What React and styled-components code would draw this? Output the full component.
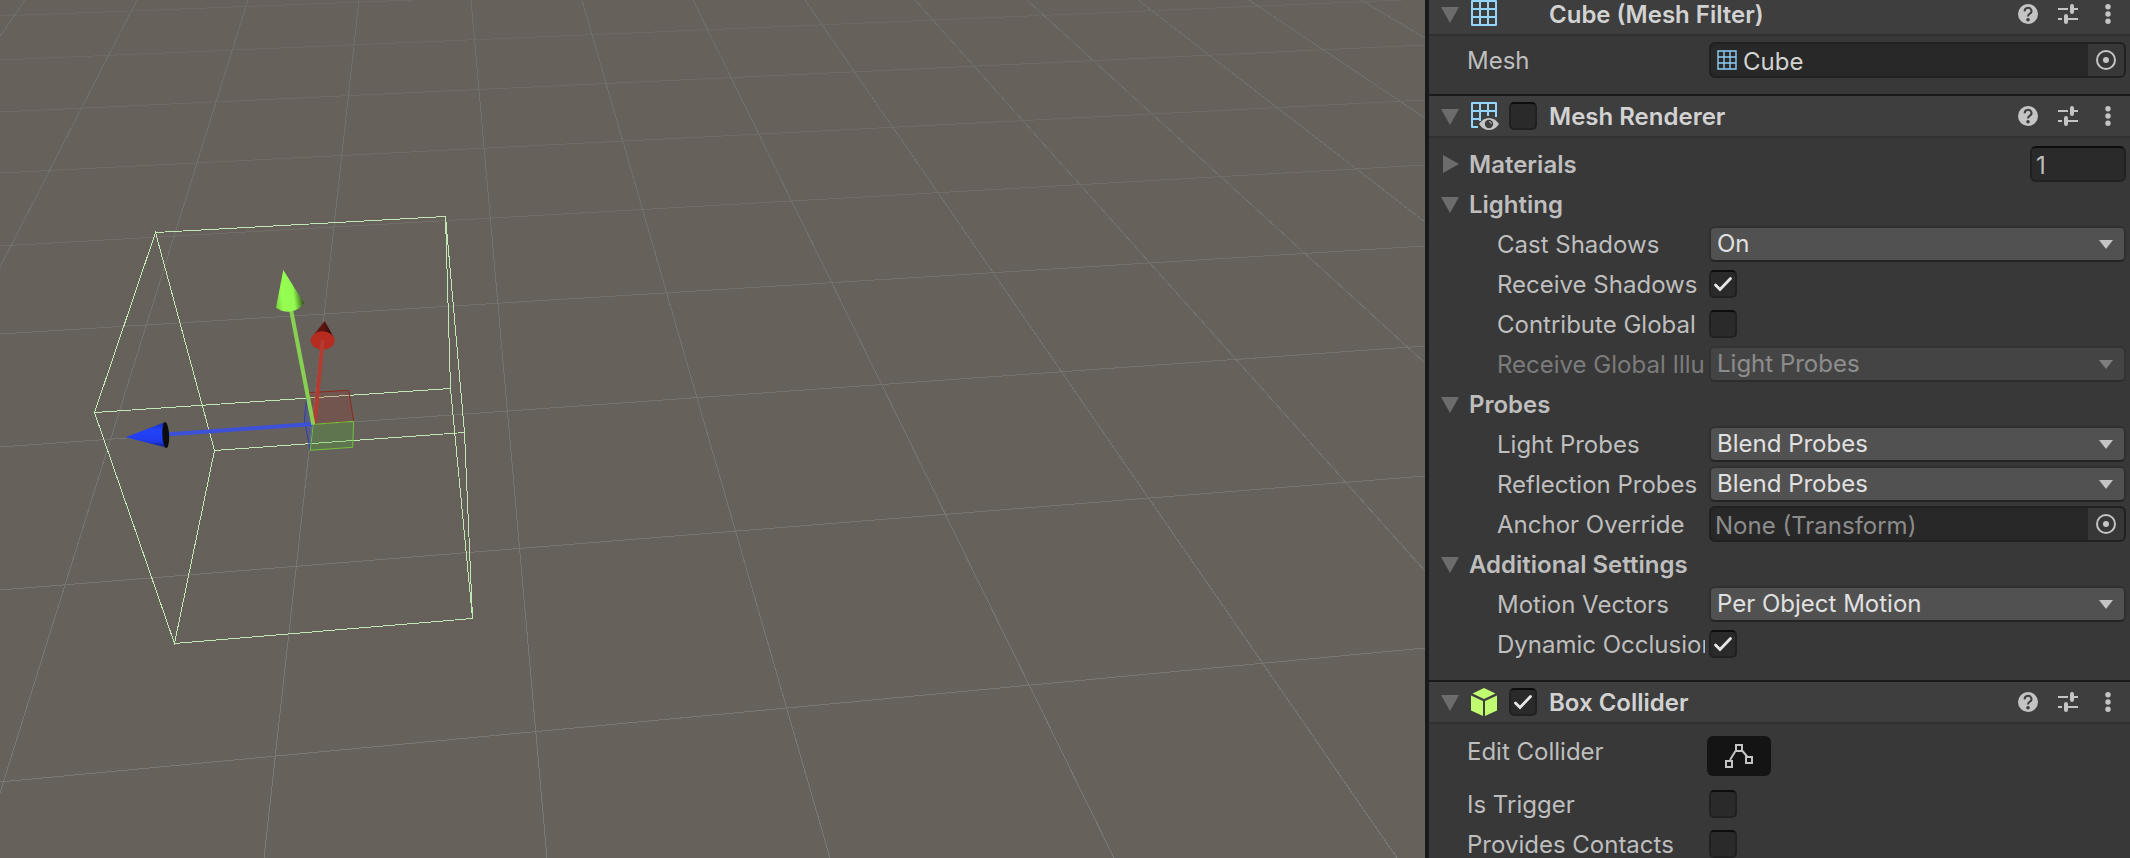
import { useState } from "react";
import styled, { createGlobalStyle } from "styled-components";

// every grid line is x1, y1, x2, y2 (rows end with their opacity)
const rows = [
    [0, 16, 413, 0, 0.6],
    [0, 60, 1402, 0, 0.6],
    [0, 112, 1425, 45, 0.7],
    [0, 173, 1425, 100, 0.7],
    [0, 246, 1425, 165, 0.8],
    [0, 334, 1425, 246, 0.9],
    [0, 447, 1425, 346, 1],
    [0, 590, 1425, 476, 1],
    [0, 782, 1425, 648, 1]
]
const columns = [
    [25, 0, 0, 36],
    [137, 0, 0, 267],
    [248, 0, 0, 793],
    [359, 0, 264, 858],
    [471, 0, 547, 858],
    [582, 0, 830, 858],
    [693, 0, 1114, 858],
    [805, 0, 1397, 858],
    [915, 0, 1425, 571],
    [1027, 0, 1425, 363],
    [1138, 0, 1425, 222],
    [1249, 0, 1425, 118],
    [1361, 0, 1425, 38]
]

export default function App() {
    return (
        <>
            <GlobalStyle />
            <Editor>
                <SceneView />
                <Inspector />
            </Editor>
        </>
    )
}

function SceneView() {
    return (
        <Scene>
            <svg viewBox="0 0 1425 858" preserveAspectRatio="xMinYMin slice" role="img" aria-label="Scene">
                <defs>
                    <linearGradient id="fade" gradientUnits="userSpaceOnUse" x1="0" y1="0" x2="0" y2="858">
                        <stop offset="0" stopColor="#706e69" />
                        <stop offset="0.5" stopColor="#767470" />
                        <stop offset="1" stopColor="#7a7974" />
                    </linearGradient>
                    <linearGradient id="coneY" x1="0" y1="0.6" x2="1" y2="0.4">
                        <stop offset="0" stopColor="#7fd944" />
                        <stop offset="0.2" stopColor="#97ff52" />
                        <stop offset="0.6" stopColor="#93fa50" />
                        <stop offset="0.82" stopColor="#4f8a2a" />
                        <stop offset="1" stopColor="#0c1405" />
                    </linearGradient>
                    <linearGradient id="coneZ" x1="0" y1="0" x2="0" y2="1">
                        <stop offset="0" stopColor="#1a2fb8" />
                        <stop offset="0.3" stopColor="#2443fa" />
                        <stop offset="0.75" stopColor="#1f3bea" />
                        <stop offset="1" stopColor="#101f86" />
                    </linearGradient>
                    <linearGradient id="coneX" x1="0" y1="0" x2="1" y2="0">
                        <stop offset="0" stopColor="#74190f" />
                        <stop offset="0.6" stopColor="#56130d" />
                        <stop offset="1" stopColor="#160403" />
                    </linearGradient>
                </defs>

                <g stroke="url(#fade)" shapeRendering="crispEdges">
                    {rows.map(([x1, y1, x2, y2, o]) => <line key={y1} x1={x1} y1={y1} x2={x2} y2={y2} opacity={o} />)}
                    {columns.map(([x1, y1, x2, y2]) => <line key={x1} x1={x1} y1={y1} x2={x2} y2={y2} />)}
                </g>

                {/* collider wireframe */}
                <g fill="none" stroke="#c1e8b4" shapeRendering="crispEdges">
                    <path d="M155.5 232.5 L94.5 412.5 L174.5 643.5 L214.5 450.5 Z" />
                    <path d="M445.5 216.5 L450.5 388.5 L472.5 618.5 L464.5 432.5 Z" />
                    <path d="M155.5 232.5 L445.5 216.5 M94.5 412.5 L450.5 388.5 M174.5 643.5 L472.5 618.5 M214.5 450.5 L464.5 432.5" />
                </g>

                {/* move handles */}
                <g>
                    <path d="M313.3 424.3 L307.3 392.7 L304.3 420 L310.3 450.3 Z" fill="#3c50dc" fillOpacity="0.25" stroke="#2f3fae" />
                    <path d="M313.3 424.3 L307.3 392.7 L348.7 390.3 L353.7 421.3 Z" fill="#a32a1e" fillOpacity="0.2" stroke="#8d2a1f" />
                    <path d="M313.3 424.3 L353.7 421.3 L352.7 447.3 L310.3 450.3 Z" fill="#4fae35" fillOpacity="0.27" stroke="#72c23a" />

                    <path d="M312 424 L169 434.3" stroke="#3d50d8" strokeWidth="4" />
                    <path d="M125.7 437.3 L164 422.5 Q168 435 166 447.5 Z" fill="url(#coneZ)" />
                    <ellipse cx="165.7" cy="435" rx="3.4" ry="13" fill="#0c0c0c" transform="rotate(-3 165.7 435)" />

                    <path d="M324.7 321 L313.5 335 L333.5 337 Z" fill="url(#coneX)" />
                    <ellipse cx="322.7" cy="340.5" rx="12" ry="9.3" fill="#b62c20" />
                    <path d="M322.7 340 L314.5 424" stroke="#b23c30" strokeWidth="4" />

                    <path d="M291.3 311 L313.3 424.5" stroke="#87d052" strokeWidth="4" />
                    <path d="M283.3 270 L276 307.5 Q281 312 290 311.7 Q300 310 304 303 Z" fill="url(#coneY)" />
                </g>
            </svg>
        </Scene>
    )
}

function Inspector() {
    return (
        <Panel>
            <Components>
                <Component title="Cube (Mesh Filter)" icon={<GridIcon size={28} />}>
                    <Body $top={6} $bottom={16}>
                        <Row>
                            <Label htmlFor="mesh">Mesh</Label>
                            <ObjectField id="mesh" value="Cube" icon />
                        </Row>
                    </Body>
                </Component>

                <Component title="Mesh Renderer" icon={<RendererIcon />} toggle>
                    <Body $top={8} $bottom={18}>
                        <Row>
                            <Foldout type="button"><Triangle closed /><span>Materials</span></Foldout>
                            <SizeInput aria-label="Materials size" defaultValue="1" />
                        </Row>
                        <Row><Foldout type="button"><Triangle /><span>Lighting</span></Foldout></Row>
                        <DropRow id="cast" label="Cast Shadows" value="On" />
                        <CheckRow id="receive" label="Receive Shadows" checked indent />
                        <CheckRow id="contribute" label="Contribute Global" indent />
                        <DropRow id="gi" label="Receive Global Illu" value="Light Probes" disabled />
                        <Row><Foldout type="button"><Triangle /><span>Probes</span></Foldout></Row>
                        <DropRow id="light" label="Light Probes" value="Blend Probes" />
                        <DropRow id="reflection" label="Reflection Probes" value="Blend Probes" />
                        <Row>
                            <Label $indent htmlFor="anchor">Anchor Override</Label>
                            <ObjectField id="anchor" value="None (Transform)" />
                        </Row>
                        <Row><Foldout type="button"><Triangle /><span>Additional Settings</span></Foldout></Row>
                        <DropRow id="motion" label="Motion Vectors" value="Per Object Motion" />
                        <CheckRow id="occlusion" label="Dynamic Occlusion" checked indent />
                    </Body>
                </Component>

                <Component title="Box Collider" icon={<ColliderIcon />} toggle enabled>
                    <Body $top={12} $bottom={16}>
                        <EditRow>
                            <Label htmlFor="edit">Edit Collider</Label>
                            <EditButton id="edit" type="button"><EditIcon /></EditButton>
                        </EditRow>
                        <CheckRow id="trigger" label="Is Trigger" />
                        <CheckRow id="contacts" label="Provides Contacts" />
                    </Body>
                </Component>
            </Components>
        </Panel>
    )
}

function Component({ title, icon, toggle, enabled, children }) {
    const [open, setOpen] = useState(true);

    return (
        <section>
            <Header>
                <IconButton type="button" $width={18} aria-label={"Fold " + title} onClick={() => setOpen(!open)}>
                    <Triangle closed={!open} />
                </IconButton>
                <Slot $left={12}>{icon}</Slot>
                <Slot $left={10}>{toggle && <Check label={title} checked={enabled} />}</Slot>
                <Title>{title}</Title>
                <IconButton type="button" $width={40} aria-label="Help"><HelpIcon /></IconButton>
                <IconButton type="button" $width={40} aria-label="Presets"><PresetIcon /></IconButton>
                <IconButton type="button" $width={40} aria-label="More"><DotsIcon /></IconButton>
            </Header>
            {open && children}
        </section>
    )
}

function CheckRow({ id, label, checked, indent }) {
    return (
        <Row>
            <Label $indent={indent} htmlFor={id}>{label}</Label>
            <Check id={id} checked={checked} />
        </Row>
    )
}

function DropRow({ id, label, value, disabled }) {
    return (
        <Row $disabled={disabled}>
            <Label $indent htmlFor={id}>{label}</Label>
            <Drop>
                <Select id={id} disabled={disabled} defaultValue={value}>
                    <option>{value}</option>
                </Select>
                <svg width="14" height="9" viewBox="0 0 14 9"><path d="M0 0H14L7 9Z" fill="#c4c4c4" /></svg>
            </Drop>
        </Row>
    )
}

function Check({ id, label, checked }) {
    return (
        <CheckWrap>
            <CheckInput type="checkbox" id={id} aria-label={label} defaultChecked={checked} />
            <svg width="28" height="28" viewBox="0 0 28 28">
                <path d="M6.5 15L11 19.5L21.5 8.5" fill="none" stroke="#e8e8e8" strokeWidth="2.8" strokeLinecap="round" />
            </svg>
        </CheckWrap>
    )
}

function ObjectField({ id, value, icon }) {
    return (
        <ObjectBox>
            {icon && <GridIcon size={20} />}
            <ObjectName id={id} readOnly value={value} $empty={!icon} />
            <Picker type="button" aria-label="Select object">
                <svg width="20" height="20" viewBox="0 0 20 20">
                    <circle cx="10" cy="10" r="9" fill="none" stroke="#c4c4c4" strokeWidth="2" />
                    <circle cx="10" cy="10" r="3" fill="#c4c4c4" />
                </svg>
            </Picker>
        </ObjectBox>
    )
}

function Triangle({ closed }) {
    return (
        <svg width="18" height="18" viewBox="0 0 18 18">
            <path d={closed ? "M2 0L18 9L2 18Z" : "M0 2H18L9 18Z"} fill="#6c6c6c" />
        </svg>
    )
}

function GridIcon({ size }) {
    // the small one has thinner lines and fills its box
    if (size < 28) return (
        <svg width="20" height="20" viewBox="0 0 20 20">
            <path d="M1 1H19V19H1ZM7 1V19M13 1V19M1 7H19M1 13H19" fill="none" stroke="#8fcdf5" strokeWidth="1.4" />
        </svg>
    )
    return (
        <svg width="28" height="28" viewBox="0 0 28 28">
            <path d="M1 1H25V25H1ZM9 1V25M17 1V25M1 9H25M1 17H25" fill="none" stroke="#94d5ff" strokeWidth="2" strokeLinejoin="round" />
        </svg>
    )
}

function RendererIcon() {
    return (
        <svg width="28" height="28" viewBox="0 0 28 28">
            <path d="M7 25H1V1H25V15M9 1V19M17 1V14M1 9H25M1 17H10" fill="none" stroke="#94d5ff" strokeWidth="2" strokeLinejoin="round" />
            <path d="M8 22Q12 16 18 16T28 22Q24 28 18 28T8 22Z" fill="#c4c4c4" />
            <circle cx="18" cy="22" r="4.2" fill="#3e3e3e" />
            <path d="M18 19.6A2.4 2.4 0 0 1 20.4 22" fill="none" stroke="#c4c4c4" strokeWidth="1" />
        </svg>
    )
}

function ColliderIcon() {
    return (
        <svg width="28" height="28" viewBox="0 0 28 28">
            <path d="M13 0L24.5 5.5L13 11L1.5 5.5Z" fill="#c0fb70" />
            <path d="M0 7.5L12 13V28L0 22.5ZM26 7.5L14 13V28L26 22.5Z" fill="#c0fb70" />
        </svg>
    )
}

function HelpIcon() {
    return (
        <svg width="20" height="20" viewBox="0 0 20 20">
            <circle cx="10" cy="10" r="10" fill="#c4c4c4" />
            <path d="M6.7 7.4A3.4 3.2 0 1 1 11.6 9.9Q10 10.8 10 12.6" fill="none" stroke="#3e3e3e" strokeWidth="2" />
            <circle cx="10" cy="15.7" r="1.8" fill="#3e3e3e" />
        </svg>
    )
}

function PresetIcon() {
    return (
        <svg width="20" height="20" viewBox="0 0 20 20">
            <path d="M0 5H10M15 5H20M0 15H4M9 15H20" stroke="#c4c4c4" strokeWidth="2" />
            <path d="M14 2V8M8 12V18" stroke="#c4c4c4" strokeWidth="4" strokeLinecap="round" />
        </svg>
    )
}

function DotsIcon() {
    return (
        <svg width="20" height="20" viewBox="0 0 20 20" fill="#c4c4c4">
            <circle cx="10" cy="2.7" r="2.7" />
            <circle cx="10" cy="10" r="2.7" />
            <circle cx="10" cy="17.3" r="2.7" />
        </svg>
    )
}

function EditIcon() {
    return (
        <svg width="28" height="24" viewBox="0 0 28 24" fill="none" stroke="#c4c4c4" strokeWidth="2">
            <path d="M5 16L10.500 7M17.500 7L22.500 13" />
            <path d="M1 17H7V23H1ZM11 1H17V7H11ZM21 13H27V19H21Z" />
        </svg>
    )
}

const GlobalStyle = createGlobalStyle`
    * {
        box-sizing: border-box;
    }
    body {
        margin: 0;
        background: #383838;
    }
    body, button, input, select {
        font-family: Inter, "Liberation Sans", sans-serif;
        font-size: 24px;
        color: #bebebe;
    }
    button {
        border: none;
        background: transparent;
        padding: 0;
    }
    svg {
        display: block;
        flex: none;
    }
`

const Editor = styled.main`
    display: grid;
    grid-template-columns: 95fr 47fr;
    height: 100vh;
    overflow: hidden;
`

const Scene = styled.div`
    min-width: 0;
    overflow: hidden;
    background: #66615b;
    svg {
        width: 100%;
        height: 100%;
    }
`

const Panel = styled.aside`
    min-width: 0;
    border-left: 4px solid #191919;
    background: #383838;
    overflow: hidden;
`

// the list is scrolled a little, the first header is cut by the top edge
const Components = styled.div`
    margin-top: -8px;
`

const Header = styled.header`
    display: flex;
    align-items: center;
    height: 44px;
    padding-left: 12px;
    padding-right: 2px;
    background: #3e3e3e;
    border-top: 2px solid #1a1a1a;
    border-bottom: 2px solid #303030;
`

const Slot = styled.div`
    width: 28px;
    margin-left: ${({ $left }) => $left}px;
`

const Title = styled.h2`
    flex: 1;
    margin: 0 0 0 12px;
    padding-top: 2px;
    font-size: 24px;
    font-weight: 600;
    line-height: 28px;
    color: #d2d2d2;
    white-space: nowrap;
`

const IconButton = styled.button`
    display: flex;
    align-items: center;
    justify-content: center;
    width: ${({ $width }) => $width}px;
    height: 40px;
`

const Body = styled.div`
    display: flex;
    flex-direction: column;
    gap: 4px;
    padding: ${({ $top }) => $top}px 4px ${({ $bottom }) => $bottom}px 0;
`

const Row = styled.div`
    display: grid;
    grid-template-columns: 280px 1fr;
    align-items: center;
    height: 36px;
    opacity: ${({ $disabled }) => $disabled ? 0.5 : 1};
`

const EditRow = styled(Row)`
    align-items: start;
    height: 46px;
`

const Label = styled.label`
    padding-top: 2px;
    padding-left: ${({ $indent }) => $indent ? 68 : 38}px;
    margin-right: 4px;
    line-height: 28px;
    white-space: nowrap;
    overflow: hidden;
`

const Foldout = styled.button`
    display: flex;
    align-items: center;
    gap: 10px;
    padding-left: 12px;
    font-weight: 600;
    line-height: 28px;
    white-space: nowrap;
    span {
        padding-top: 2px;
    }
`

const SizeInput = styled.input`
    justify-self: end;
    width: 96px;
    height: 36px;
    padding: 2px 4px 0;
    background: #2a2a2a;
    border: 2px solid #212121;
    border-top-color: #0d0d0d;
    border-radius: 6px;
`

const Drop = styled.div`
    display: grid;
    align-items: center;
    svg {
        grid-area: 1 / 1;
        justify-self: end;
        margin-right: 13px;
        pointer-events: none;
    }
`

const Select = styled.select`
    grid-area: 1 / 1;
    appearance: none;
    width: 100%;
    height: 36px;
    padding: 0 32px 2px 6px;
    color: #e0e0e0;
    background: #515151;
    border: 2px solid #303030;
    border-bottom-color: #242424;
    border-radius: 6px;
    &:disabled {
        opacity: 1;
    }
`

const CheckWrap = styled.span`
    display: grid;
    width: 28px;
    height: 28px;
    svg {
        grid-area: 1 / 1;
        visibility: hidden;
        pointer-events: none;
    }
    input:checked + svg {
        visibility: visible;
    }
`

const CheckInput = styled.input`
    grid-area: 1 / 1;
    appearance: none;
    width: 28px;
    height: 28px;
    margin: 0;
    background: #2a2a2a;
    border: 2px solid #212121;
    border-top-color: #0d0d0d;
    border-radius: 5px;
`

const ObjectBox = styled.div`
    display: flex;
    align-items: center;
    height: 36px;
    padding-left: ${({ $empty }) => $empty ? 4 : 6}px;
    background: #282828;
    border: 2px solid #212121;
    border-radius: 6px;
    overflow: hidden;
`

const ObjectName = styled.input`
    flex: 1;
    min-width: 0;
    padding: 2px 0 0 ${({ $empty }) => $empty ? 0 : 6}px;
    margin-left: ${({ $empty }) => $empty ? -2 : 0}px;
    border: none;
    background: transparent;
    color: ${({ $empty }) => $empty ? "#8c8c8c" : "#d2d2d2"};
`

const Picker = styled.button`
    display: flex;
    align-items: center;
    justify-content: center;
    width: 36px;
    height: 32px;
    background: #373737;
`

const EditButton = styled.button`
    display: flex;
    align-items: center;
    justify-content: center;
    width: 64px;
    height: 40px;
    margin-left: -2px;
    background: #141414;
    border-radius: 6px;
`
